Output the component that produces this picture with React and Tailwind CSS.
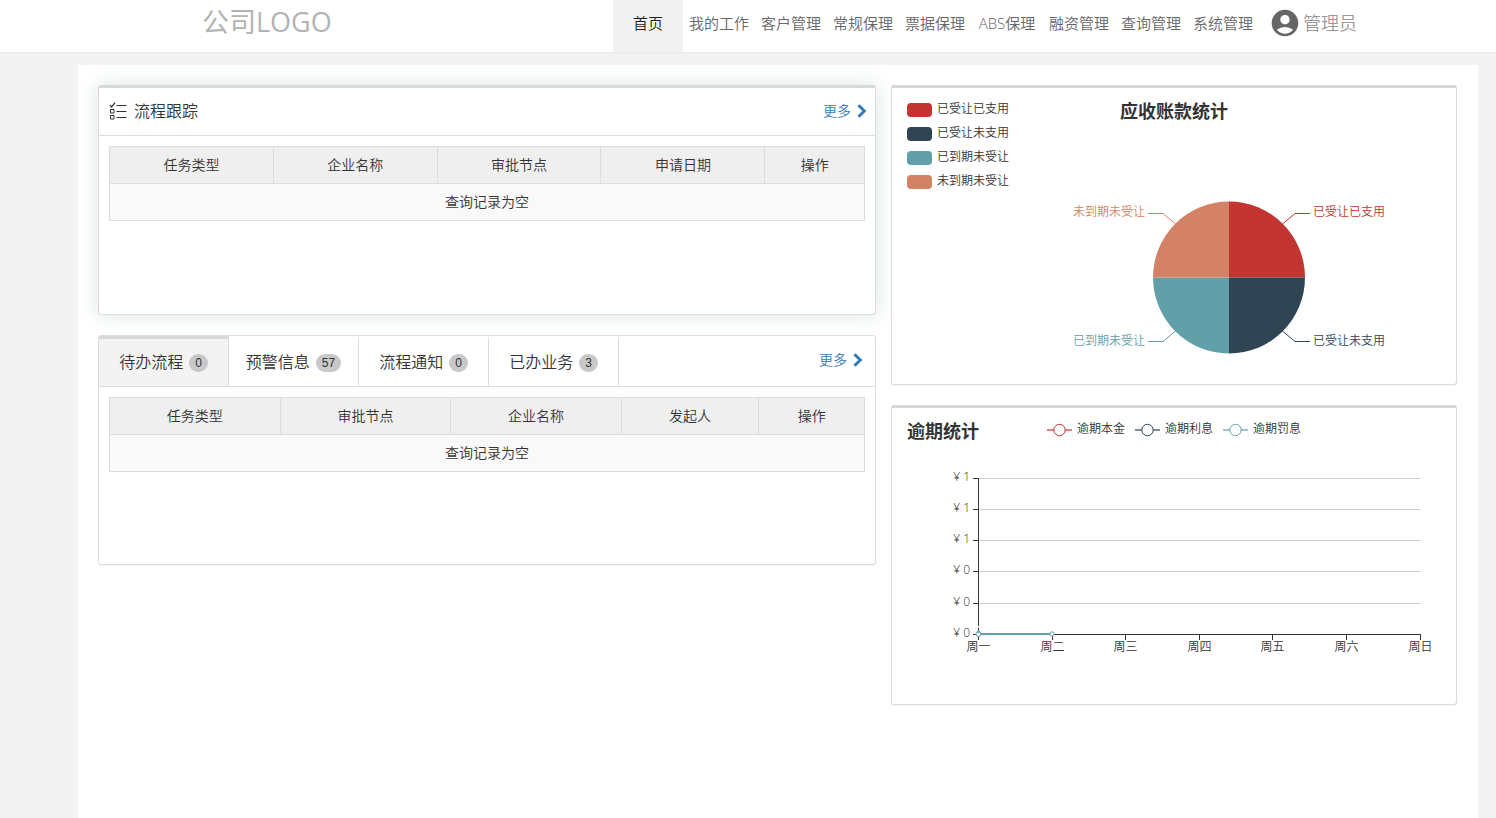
import { useState } from "react";
import { MdAccountCircle } from "react-icons/md";

const menus = ["首页", "我的工作", "客户管理", "常规保理", "票据保理", "ABS保理", "融资管理", "查询管理", "系统管理"];

const trackColumns = [
    { title: "任务类型", width: "w-[21.7%]" },
    { title: "企业名称", width: "w-[21.7%]" },
    { title: "审批节点", width: "w-[21.7%]" },
    { title: "申请日期", width: "w-[21.7%]" },
    { title: "操作", width: "w-[13.2%]" },
];

const taskColumns = [
    { title: "任务类型", width: "w-[22.6%]" },
    { title: "审批节点", width: "w-[22.6%]" },
    { title: "企业名称", width: "w-[22.6%]" },
    { title: "发起人", width: "w-[18.2%]" },
    { title: "操作", width: "w-[14%]" },
];

const tabs = [
    { title: "待办流程", count: 0 },
    { title: "预警信息", count: 57 },
    { title: "流程通知", count: 0 },
    { title: "已办业务", count: 3 },
];

const receivables = [
    { name: "已受让已支用", swatch: "bg-[#c23531]" },
    { name: "已受让未支用", swatch: "bg-[#2f4554]" },
    { name: "已到期未受让", swatch: "bg-[#61a0a8]" },
    { name: "未到期未受让", swatch: "bg-[#d48265]" },
];

const overdue = [
    { name: "逾期本金", color: "#c23531" },
    { name: "逾期利息", color: "#2f4554" },
    { name: "逾期罚息", color: "#61a0a8" },
];

const yTicks = [
    { label: "¥ 1", y: 30.5 },
    { label: "¥ 1", y: 61.5 },
    { label: "¥ 1", y: 92.5 },
    { label: "¥ 0", y: 123.5 },
    { label: "¥ 0", y: 155.5 },
    { label: "¥ 0", y: 186.5 },
];

const xTicks = [
    { label: "周一", x: 86.5 },
    { label: "周二", x: 160.5 },
    { label: "周三", x: 233.5 },
    { label: "周四", x: 307.5 },
    { label: "周五", x: 380.5 },
    { label: "周六", x: 454.5 },
    { label: "周日", x: 528.5 },
];

function ListIcon() {
    return (
        <svg width="18" height="20" viewBox="0 0 18 20" fill="none" stroke="#333" aria-hidden="true">
            <path d="M1 4.2 2.6 6 6 1.6" strokeWidth="1.3" />
            <path d="M1.5 8.5h3.5v3.5H1.5zM1.5 14.5h3.5V18H1.5z" />
            <path d="M7.5 4.5h10M7.5 10.5h10M7.5 16.5h10" />
        </svg>
    );
}

function MoreLink() {
    return (
        <a href="#more" className="flex items-center gap-[6px] pb-[2px] text-sm text-[#337ab7]">
            更多
            <svg width="10" height="14" viewBox="0 0 10 14" fill="none" stroke="currentColor" strokeWidth="3" aria-hidden="true">
                <path d="M1.5 1.2 7.3 7 1.5 12.8" />
            </svg>
        </a>
    );
}

function DataTable({ columns }) {
    return (
        <div className="p-[10px]">
            <table className="w-full table-fixed border-collapse border border-[#ddd] text-center text-sm text-[#333]">
                <thead>
                    <tr className="h-[37px] bg-[#efefef]">
                        {columns.map((col) => (
                            <th key={col.title} className={`${col.width} border border-[#ddd] font-[350]`}>
                                {col.title}
                            </th>
                        ))}
                    </tr>
                </thead>
                <tbody>
                    <tr className="h-[37px] bg-[#f9f9f9]">
                        <td colSpan={columns.length}>查询记录为空</td>
                    </tr>
                </tbody>
            </table>
        </div>
    );
}

function Header() {
    const [active, setActive] = useState("首页");

    return (
        <header className="relative flex h-[52px] items-center justify-between bg-white pl-[202px] pr-[139px] shadow-[0_0_2px_rgba(0,0,0,0.12)]">
            <div className="pb-2 text-[27px] leading-9 font-normal text-[#b3b3b3]">公司LOGO</div>
            <div className="flex h-full items-center">
                <nav className="flex h-full">
                    {menus.map((menu) => (
                        <a
                            key={menu}
                            href="#menu"
                            onClick={() => setActive(menu)}
                            className={`flex items-center justify-center pb-[6px] text-[15px] ${
                                active === menu ? "bg-[#f1f1f1] px-5 text-[#222]" : "min-w-[72px] px-[6px] text-[#666]"
                            }`}
                        >
                            {menu}
                        </a>
                    ))}
                </nav>
                <button type="button" className="ml-[10px] flex items-center gap-[2px] pb-[6px] text-lg text-[#999]">
                    <MdAccountCircle className="size-8 text-[#666]" />
                    管理员
                </button>
            </div>
        </header>
    );
}

function TrackCard() {
    return (
        <section className="min-h-[230px] rounded-[3px] border border-t-3 border-[#ddd] border-t-[#d8d8d8] bg-white shadow-[0_0_20px_rgba(50,100,105,0.18)]">
            <div className="flex h-12 items-center justify-between border-b border-[#ddd] pl-[10px] pr-2">
                <h2 className="flex items-center gap-[7px] pb-[2px] text-base text-[#333]">
                    <ListIcon />
                    流程跟踪
                </h2>
                <MoreLink />
            </div>
            <DataTable columns={trackColumns} />
        </section>
    );
}

function TaskCard() {
    const [active, setActive] = useState(0);

    return (
        <section className="min-h-[230px] rounded-[3px] border border-[#ddd] bg-white shadow-[0_1px_1px_rgba(0,0,0,0.05)]">
            <div className="flex h-[51px] items-center justify-between border-b border-[#ddd] pr-3">
                <div role="tablist" className="flex h-full">
                    {tabs.map((tab, i) => (
                        <button
                            key={tab.title}
                            type="button"
                            role="tab"
                            aria-selected={active === i}
                            onClick={() => setActive(i)}
                            className={`flex w-[130px] items-center justify-center gap-[6px] border-t-3 border-r border-r-[#ddd] text-base text-[#333] ${
                                active === i ? "border-t-[#d8d8d8] bg-[#f3f3f3]" : "border-t-transparent"
                            }`}
                        >
                            <span className="pb-[2px]">{tab.title}</span>
                            <span className="rounded-full bg-[#c8c8c8] px-[6px] font-['Liberation_Sans',sans-serif] text-xs leading-[18px]">
                                {tab.count}
                            </span>
                        </button>
                    ))}
                </div>
                <MoreLink />
            </div>
            <DataTable columns={taskColumns} />
        </section>
    );
}

function ReceivablesCard() {
    return (
        <section className="min-h-[300px] rounded-[3px] border border-t-3 border-[#ddd] border-t-[#d8d8d8] bg-white shadow-[0_1px_1px_rgba(0,0,0,0.05)]">
            <div className="grid grid-cols-[1fr_auto_1fr] px-[15px] pt-[10px]">
                <ul className="text-xs text-[#333]">
                    {receivables.map((item) => (
                        <li key={item.name} className="flex h-6 items-center gap-[5px]">
                            <span className={`h-[14px] w-[25px] rounded-[4px] ${item.swatch}`} />
                            <span className="pb-[2px]">{item.name}</span>
                        </li>
                    ))}
                </ul>
                <h2 className="text-lg leading-[26px] font-bold text-[#333]">应收账款统计</h2>
            </div>
            <svg viewBox="0 0 564 190" className="block w-full text-xs" role="img" aria-label="应收账款统计">
                <path d="M337 83.5V7.5a76 76 0 0 1 76 76z" fill="#c23531" />
                <path d="M337 83.5h76a76 76 0 0 1-76 76z" fill="#2f4554" />
                <path d="M337 83.5v76a76 76 0 0 1-76-76z" fill="#61a0a8" />
                <path d="M337 83.5h-76a76 76 0 0 1 76-76z" fill="#d48265" />
                <g fill="none">
                    <path d="M390.7 29.8 403 19.5h15" stroke="#c23531" />
                    <path d="M390.7 137.2 403 147.5h15" stroke="#2f4554" />
                    <path d="M283.3 137.2 271 147.5h-15" stroke="#61a0a8" />
                    <path d="M283.3 29.8 271 19.5h-15" stroke="#d48265" />
                </g>
                <text x="421" y="22" fill="#c23531">已受让已支用</text>
                <text x="421" y="151" fill="#2f4554">已受让未支用</text>
                <text x="253" y="151" textAnchor="end" fill="#61a0a8">已到期未受让</text>
                <text x="253" y="22" textAnchor="end" fill="#d48265">未到期未受让</text>
            </svg>
        </section>
    );
}

function OverdueCard() {
    return (
        <section className="min-h-[300px] rounded-[3px] border border-t-3 border-[#ddd] border-t-[#d8d8d8] bg-white shadow-[0_1px_1px_rgba(0,0,0,0.05)]">
            <div className="grid h-10 grid-cols-[1fr_auto_1fr] px-[15px] pt-[10px]">
                <h2 className="text-lg leading-[26px] font-bold text-[#333]">逾期统计</h2>
                <ul className="flex gap-[10px] text-xs text-[#333]">
                    {overdue.map((item) => (
                        <li key={item.name} className="flex h-6 items-center gap-[5px]">
                            <svg width="25" height="14" viewBox="0 0 25 14" stroke={item.color} aria-hidden="true">
                                <path d="M0 7h25" strokeWidth="2" opacity="0.6" />
                                <circle cx="12.5" cy="7" r="5.7" fill="#fff" />
                            </svg>
                            <span className="pb-[2px]">{item.name}</span>
                        </li>
                    ))}
                </ul>
            </div>
            <svg viewBox="0 0 564 256" className="block w-full text-xs" role="img" aria-label="逾期统计">
                {yTicks.map((tick) => (
                    <g key={tick.y}>
                        <path d={`M87 ${tick.y}h441`} stroke="#ccc" />
                        <path d={`M81 ${tick.y}h5`} stroke="#333" />
                        <text x="78" y={tick.y + 2.5} textAnchor="end" fill="#333">{tick.label}</text>
                    </g>
                ))}
                {xTicks.map((tick) => (
                    <g key={tick.x}>
                        <path d={`M${tick.x} 187v5`} stroke="#333" />
                        <text x={tick.x} y="203" textAnchor="middle" fill="#333">{tick.label}</text>
                    </g>
                ))}
                <path d="M86.5 30V187M86 186.5h443" fill="none" stroke="#333" />
                <path d="M86.5 186h74" stroke="#61a0a8" strokeWidth="2" />
                <circle cx="86.5" cy="186" r="2.5" fill="#fff" stroke="#61a0a8" />
                <path d="M86.5 178v1.5" stroke="#fff" strokeWidth="2" />
                <path d="M86.5 182v3" stroke="#61a0a8" strokeWidth="2" />
                <circle cx="160" cy="186" r="2.2" fill="#fff" stroke="#61a0a8" />
            </svg>
        </section>
    );
}

export default function App() {
    return (
        <div className="flex min-h-screen flex-col bg-[#f3f3f3] font-['Open_Sans','Noto_Sans_CJK_SC',sans-serif] font-[350]">
            <Header />
            <main className="mt-[13px] mr-[18px] ml-[78px] flex-1 bg-white py-5 pr-[21px] pl-5">
                <div className="grid grid-cols-[778fr_566fr] items-start gap-[15px]">
                    <div className="flex flex-col gap-5">
                        <TrackCard />
                        <TaskCard />
                    </div>
                    <div className="flex flex-col gap-5">
                        <ReceivablesCard />
                        <OverdueCard />
                    </div>
                </div>
            </main>
        </div>
    );
}
